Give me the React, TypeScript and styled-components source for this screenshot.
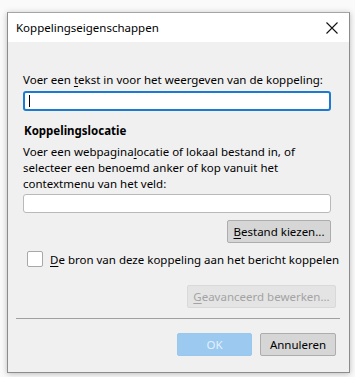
import React from "react";
import styled, { createGlobalStyle } from "styled-components";

const GlobalStyle = createGlobalStyle`
  html, body {
    margin: 0;
    padding: 0;
    background: #ffffff;
  }
  body {
    font-family: "Noto Sans", "Open Sans", "Liberation Sans", sans-serif;
    font-size: 11.5px;
    color: #000;
  }
`;

const Page = styled.div`
  width: 355px;
  height: 377px;
  box-sizing: border-box;
  padding: 12px 5px 4px 7px;
  background: #fafafa;
`;

const Window = styled.div`
  height: 100%;
  box-sizing: border-box;
  display: flex;
  flex-direction: column;
  border: 1px solid #8c8c8c;
  border-top-color: #a6a6a6;
  background: #f0f0f0;
  box-shadow: 0 1px 6px rgba(0, 0, 0, 0.25);
  overflow: hidden;
`;

const TitleBar = styled.div`
  height: 29px;
  flex: none;
  display: flex;
  align-items: center;
  justify-content: space-between;
  padding: 0 10px 0 8px;
  background: #ffffff;
`;

const Title = styled.span`
  font-size: 11.5px;
  color: #000;
`;

const CloseIcon = styled.svg`
  width: 12px;
  height: 12px;
  margin-right: 1px;
`;

const Body = styled.div`
  flex: 1;
  display: flex;
  flex-direction: column;
  padding: 31px 13px 0 15px;
  white-space: nowrap;
`;

const Label = styled.div`
  line-height: 14px;
`;

const SectionTitle = styled.div`
  font-weight: 700;
  line-height: 16px;
  margin-top: 12px;
  margin-left: 1px;
`;

const Description = styled.div`
  line-height: 16px;
  margin-top: 5px;
`;

const Key = styled.span`
  text-decoration: underline;
  text-underline-offset: 2px;
`;

const TextField = styled.div<{ $focused?: boolean }>`
  height: ${(p) => (p.$focused ? "20px" : "19px")};
  width: 308px;
  box-sizing: border-box;
  margin-top: ${(p) => (p.$focused ? "4px" : "2px")};
  background: #fff;
  border: ${(p) => (p.$focused ? "2px solid #1a7bd0" : "1px solid #b9b9b9")};
  border-radius: 3px;
  display: flex;
  align-items: center;
  padding-left: 4px;
`;

const Caret = styled.span`
  width: 1px;
  height: 12px;
  background: #000;
`;

const Row = styled.div<{ $gap?: number }>`
  display: flex;
  align-items: center;
  justify-content: flex-end;
  gap: ${(p) => p.$gap ?? 0}px;
`;

const Button = styled.div<{ $variant?: "normal" | "disabled" | "primary" }>`
  height: 23px;
  box-sizing: border-box;
  padding: 0 4px;
  display: flex;
  align-items: center;
  justify-content: center;
  white-space: nowrap;
  border-radius: 2px;
  border: 1px solid
    ${(p) =>
      p.$variant === "disabled"
        ? "#d9d9d9"
        : p.$variant === "primary"
          ? "#9ac7ec"
          : "#adadad"};
  background: ${(p) =>
    p.$variant === "disabled"
      ? "#e4e4e4"
      : p.$variant === "primary"
        ? "#9bc9f0"
        : "#d6d6d6"};
  color: ${(p) =>
    p.$variant === "disabled"
      ? "#a3a3a3"
      : p.$variant === "primary"
        ? "#e3f0fb"
        : "#000"};
`;

const CheckRow = styled.label`
  display: flex;
  align-items: center;
  gap: 7px;
  height: 16px;
  margin-top: 8px;
  margin-left: 4px;
`;

const CheckBox = styled.span`
  width: 16px;
  height: 16px;
  flex: none;
  box-sizing: border-box;
  border: 1px solid #a8a8a8;
  border-radius: 2px;
  background: #fff;
`;

const Separator = styled.div`
  height: 1px;
  background: #a0a0a0;
  margin: 10px -4px 0 -7px;
`;

export default function App() {
  return (
    <>
      <GlobalStyle />
      <Page>
        <Window>
          <TitleBar>
            <Title>Koppelingseigenschappen</Title>
            <CloseIcon viewBox="0 0 12 12">
              <path d="M0.5 0.5 L11.5 11.5 M11.5 0.5 L0.5 11.5" stroke="#111" strokeWidth="1.1" />
            </CloseIcon>
          </TitleBar>
          <Body>
            <Label>
              Voer een <Key>t</Key>ekst in voor het weergeven van de koppeling:
            </Label>
            <TextField $focused>
              <Caret />
            </TextField>
            <SectionTitle>Koppelingslocatie</SectionTitle>
            <Description>
              Voer een webpagina<Key>l</Key>ocatie of lokaal bestand in, of
              <br />
              selecteer een benoemd anker of kop vanuit het
              <br />
              contextmenu van het veld:
            </Description>
            <TextField />
            <Row style={{ marginTop: 7, width: 308 }}>
              <Button style={{ width: 104 }}>
                <span>
                  <Key>B</Key>estand kiezen...
                </span>
              </Button>
            </Row>
            <CheckRow>
              <CheckBox />
              <span>
                <Key>D</Key>e bron van deze koppeling aan het bericht koppelen
              </span>
            </CheckRow>
            <Row style={{ marginTop: 18 }}>
              <Button $variant="disabled" style={{ width: 149 }}>
                <span>
                  <Key>G</Key>eavanceerd bewerken...
                </span>
              </Button>
            </Row>
            <Separator />
            <Row $gap={8} style={{ marginTop: 14 }}>
              <Button $variant="primary" style={{ width: 75 }}>
                OK
              </Button>
              <Button style={{ width: 76 }}>Annuleren</Button>
            </Row>
          </Body>
        </Window>
      </Page>
    </>
  );
}
